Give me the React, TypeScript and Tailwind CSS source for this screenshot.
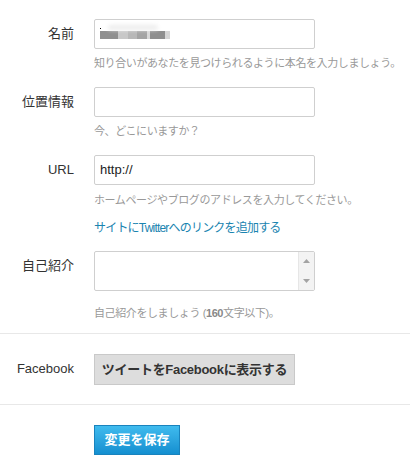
import React from "react";

const font = { fontFamily: '"Liberation Sans", "Noto Sans CJK JP", sans-serif' };

function Label({ children }: { children: React.ReactNode }) {
  return (
    <div className="w-[74px] shrink-0 text-right text-[13px] leading-[30px] text-[#333]">
      {children}
    </div>
  );
}

function Help({ children, className = "" }: { children: React.ReactNode; className?: string }) {
  return (
    <div className={"text-[11px] leading-[16px] tracking-[-0.4px] text-[#999] whitespace-nowrap " + className}>
      {children}
    </div>
  );
}

export default function App() {
  return (
    <div className="w-[410px] h-[471px] bg-white overflow-hidden" style={font}>
      <div className="pt-[19px]">
        {/* Name */}
        <div className="flex">
          <Label>名前</Label>
          <div className="ml-[20px]">
            <div className="w-[221px] h-[30px] border border-[#cfcfcf] rounded-[2px] bg-white flex items-center pl-[5px]">
              <div className="relative flex h-[8px] mt-[2px]">
                <div className="absolute -top-[3px] left-0 w-[1px] h-[1px] bg-black" />
                <div className="absolute -top-[6px] left-[8px] w-[50px] h-[5px] rounded-full bg-[#ececec] blur-[2px]" />
                <div className="w-[18px] bg-[#8f8f8f]" />
                <div className="w-[10px] bg-[#c8c8c8]" />
                <div className="w-[9px] bg-[#b8b8b8]" />
                <div className="w-[10px] bg-[#a4a4a4]" />
                <div className="w-[3px] bg-[#d8d8d8]" />
                <div className="w-[15px] bg-[#8f8f8f]" />
                <div className="w-[5px] bg-[#d6d6d6]" />
              </div>
            </div>
            <Help className="mt-[6px]">知り合いがあなたを見つけられるように本名を入力しましょう。</Help>
          </div>
        </div>

        {/* Location */}
        <div className="flex mt-[16px]">
          <Label>位置情報</Label>
          <div className="ml-[20px]">
            <div className="w-[221px] h-[30px] border border-[#cfcfcf] rounded-[2px] bg-white" />
            <Help className="mt-[6px]">今、どこにいますか？</Help>
          </div>
        </div>

        {/* URL */}
        <div className="flex mt-[16px]">
          <Label>URL</Label>
          <div className="ml-[20px]">
            <div className="w-[221px] h-[30px] border border-[#cfcfcf] rounded-[2px] bg-white flex items-center pl-[5px] text-[13px] text-[#222]">
              http://
            </div>
            <Help className="mt-[7px]">ホームページやブログのアドレスを入力してください。</Help>
            <div className="mt-[12px] text-[12px] leading-[16px] tracking-[-0.8px] text-[#1a84b0] whitespace-nowrap">
              サイトにTwitterへのリンクを追加する
            </div>
          </div>
        </div>

        {/* Bio */}
        <div className="flex mt-[15px]">
          <Label>自己紹介</Label>
          <div className="ml-[20px]">
            <div className="relative w-[221px] h-[40px] border border-[#cfcfcf] rounded-[2px] bg-white">
              <div className="absolute right-0 top-0 bottom-0 w-[16px] bg-[#f3f3f3] border-l border-[#e6e6e6] flex flex-col items-center justify-between py-[7px]">
                <svg width="7" height="4" viewBox="0 0 7 4"><path d="M3.5 0 L7 4 L0 4 Z" fill="#a3a3a3" /></svg>
                <svg width="7" height="4" viewBox="0 0 7 4"><path d="M0 0 L7 0 L3.5 4 Z" fill="#a3a3a3" /></svg>
              </div>
            </div>
            <Help className="mt-[14px]">
              自己紹介をしましょう (<b className="font-bold text-[#888]">160</b>文字以下)。
            </Help>
          </div>
        </div>
      </div>

      <div className="mt-[12px] border-t border-[#e8e8e8]" />

      {/* Facebook */}
      <div className="flex pt-[20px] pb-[19px]">
        <Label>Facebook</Label>
        <div className="ml-[20px]">
          <button className="h-[31px] w-[201px] border border-[#c9c9c9] bg-[#dddddd] text-[13px] font-bold text-[#333] tracking-[-0.3px] whitespace-nowrap">
            ツイートをFacebookに表示する
          </button>
        </div>
      </div>

      <div className="border-t border-[#e8e8e8]" />

      {/* Save */}
      <div className="pt-[20px] pl-[94px]">
        <button className="h-[30px] w-[86px] border border-[#1983bd] bg-gradient-to-b from-[#3fbbee] to-[#138fd0] text-white text-[13px] font-bold">
          変更を保存
        </button>
      </div>
    </div>
  );
}
